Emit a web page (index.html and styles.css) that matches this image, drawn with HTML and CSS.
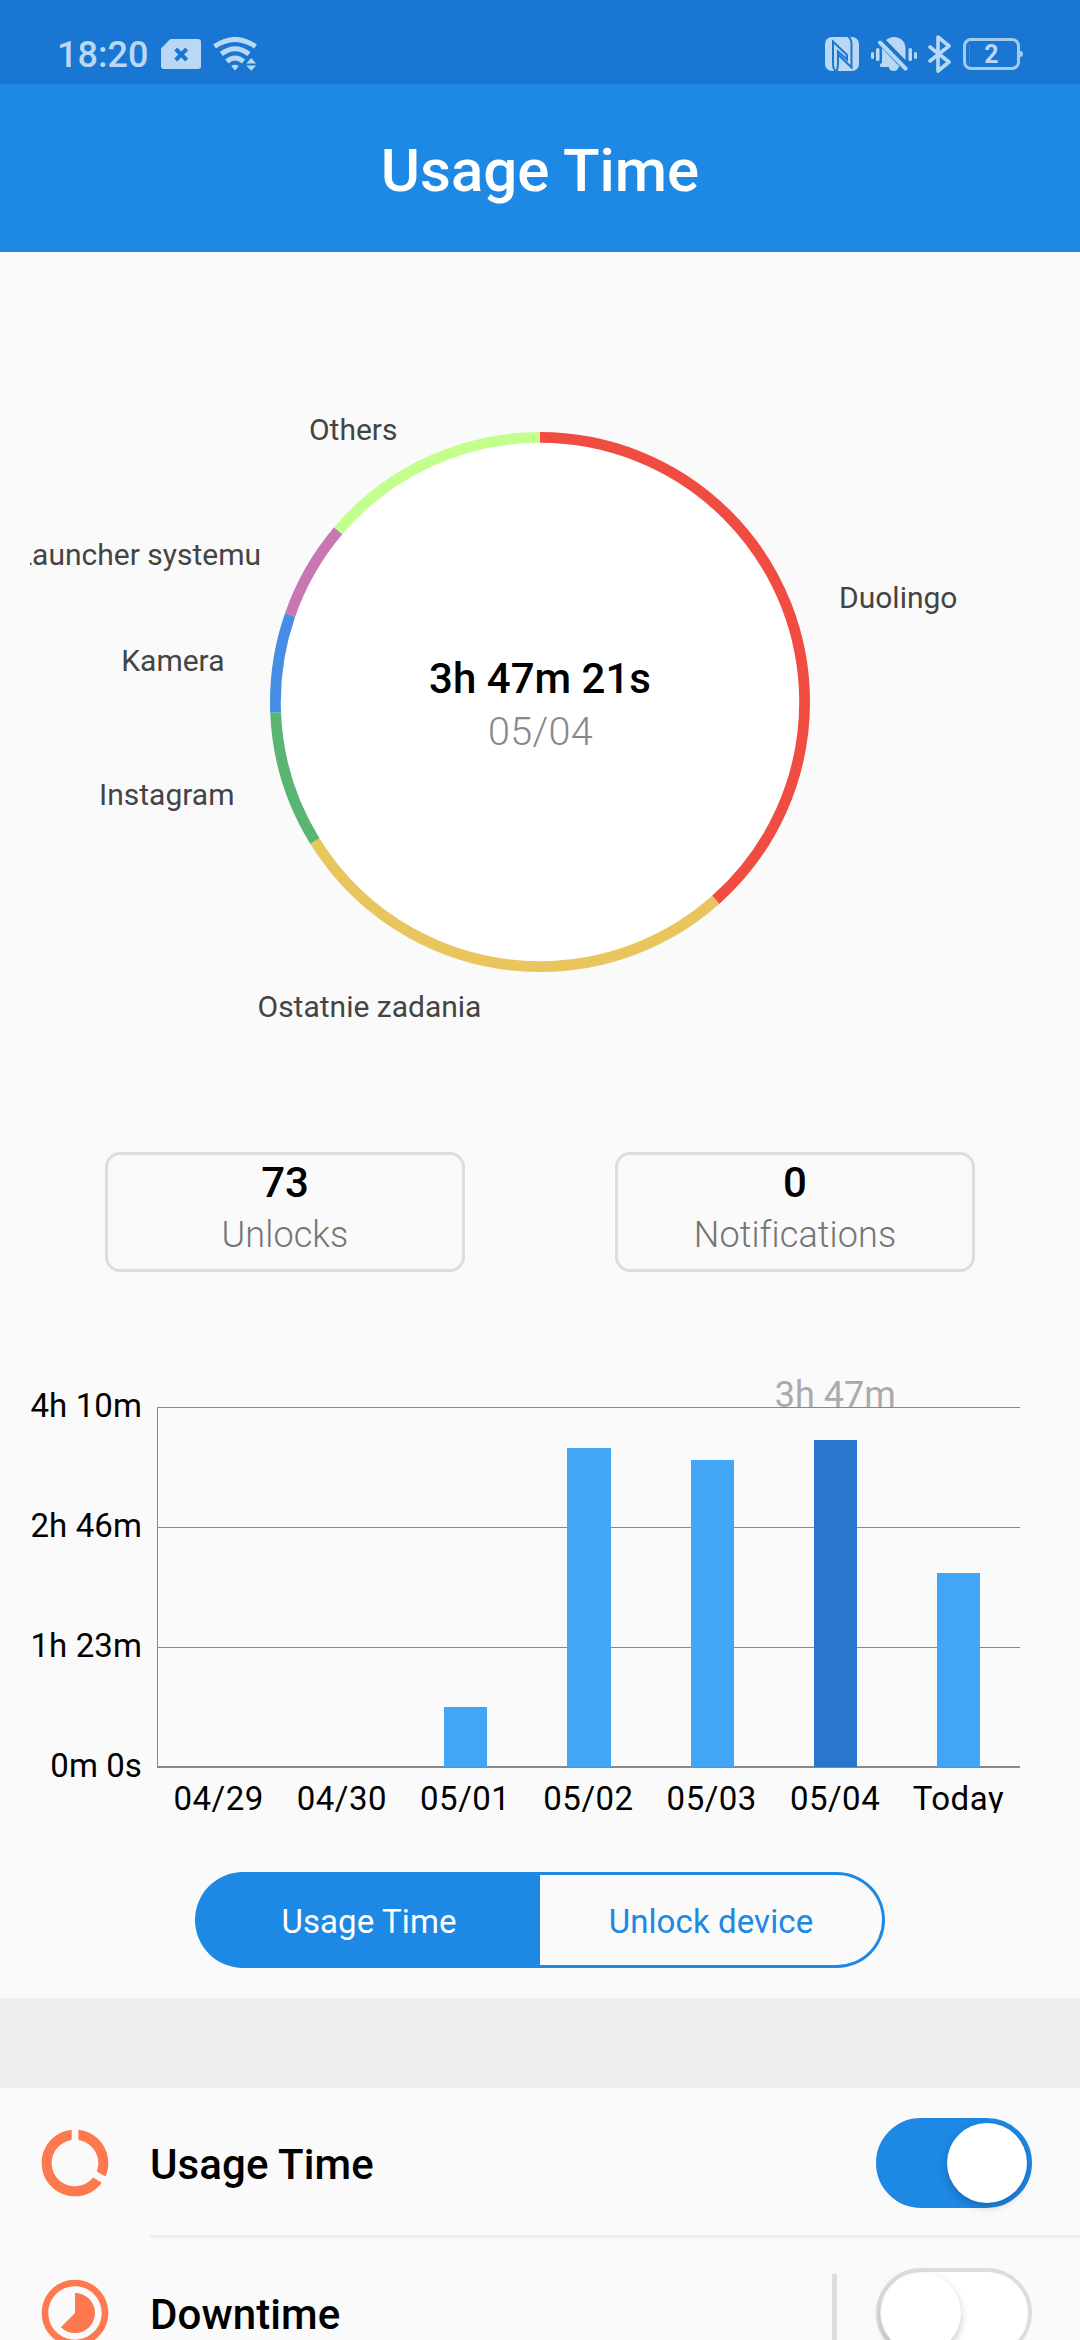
FILE: index.html
```html
<!DOCTYPE html>
<html lang="en">

<head>
    <meta charset="UTF-8">
    <title>Usage Time</title>
    <link rel="stylesheet" href="styles.css">
</head>

<body>
    <div class="status-bar">
        <span class="time">18:20</span>
        <svg class="sim" width="40" height="30" viewBox="0 0 40 30">
            <path fill="#bad7f3" d="M10 0h27a3 3 0 0 1 3 3v24a3 3 0 0 1-3 3H3a3 3 0 0 1-3-3V9.500L8.500 .8z" />
            <path stroke="#1976d2" stroke-width="4" d="M14.700 10l11 11M25.700 10l-11 11" />
        </svg>
        <svg class="wifi" width="44" height="34" viewBox="0 0 44 34">
            <g fill="none" stroke="#bad7f3" stroke-width="5">
                <path d="M1.500 9.500Q22-4.500 42.500 9.500" />
                <path d="M8.300 17Q22 6.500 36 17" />
                <path d="M13.800 24.500Q22 17.500 30.500 24.500" />
            </g>
            <path fill="#bad7f3" d="M18.200 29q3.800-2.600 7.600 0L22 33.500zM33.200 26.500l5-5.500 5 5.500zM33.200 28.500h10l-5 5.300z" />
        </svg>
        <span class="space"></span>
        <svg class="nfc" width="34" height="34" viewBox="0 0 34 34">
            <rect width="34" height="34" rx="7" fill="#bad7f3" />
            <g fill="none" stroke="#1976d2" stroke-width="2">
                <path d="M11.500 35C8 32.500 8 30 8 27V4.500L22 18V22.500L13 14.500V27C13 30 12.500 32 11.500 35" />
                <path d="M23-1C26 1.500 26.500 4 26.500 7V30.500L12.500 17" />
            </g>
        </svg>
        <svg class="bell" width="46" height="34" viewBox="0 0 46 34">
            <g fill="#bad7f3">
                <rect y="15" width="3" height="7" rx="1.500" />
                <rect x="5" y="11" width="3.500" height="13" rx="1.500" />
                <rect x="37.500" y="11" width="3.500" height="13" rx="1.500" />
                <rect x="43" y="15" width="3" height="7" rx="1.500" />
                <path d="M15 3Q19 0 22.500 0 34 .5 34.500 11.500V23zM11 11L29 30H27.500Q27 34 22.500 34 18.500 34 17.700 30H10Q8.500 30 8.800 28L11 25.500z" />
            </g>
            <path stroke="#bad7f3" stroke-width="4" stroke-linecap="round" d="M9 5.500L34.500 31.500" />
        </svg>
        <svg class="bluetooth" width="24" height="38" viewBox="0 0 24 38">
            <path fill="none" stroke="#bad7f3" stroke-width="3.600" stroke-linecap="round" stroke-linejoin="round" d="M2 12L21 27 10 36V2L21 11 2 26" />
        </svg>
        <div class="battery"><i></i><span>2</span></div>
    </div>

    <div class="header">Usage Time</div>

    <svg class="pie" width="1080" height="840" viewBox="0 252 1080 840">
        <circle cx="540" cy="702" r="262" fill="#fff" />
        <!-- one arc per app, dash lengths are in degrees -->
        <g class="arcs" transform="rotate(-90 540 702)">
            <circle cx="540" cy="702" r="264.600" pathLength="360" stroke="#f04c41" stroke-dasharray="138.400 360" />
            <circle cx="540" cy="702" r="264.600" pathLength="360" stroke="#e9c55e" stroke-dasharray="99.900 360" stroke-dashoffset="-138.400" />
            <circle cx="540" cy="702" r="264.600" pathLength="360" stroke="#5bb572" stroke-dasharray="29.400 360" stroke-dashoffset="-238.300" />
            <circle cx="540" cy="702" r="264.600" pathLength="360" stroke="#458de5" stroke-dasharray="21.500 360" stroke-dashoffset="-267.700" />
            <circle cx="540" cy="702" r="264.600" pathLength="360" stroke="#c777b2" stroke-dasharray="21.100 360" stroke-dashoffset="-289.200" />
            <circle cx="540" cy="702" r="264.600" pathLength="360" stroke="#c3ff8c" stroke-dasharray="49.700 360" stroke-dashoffset="-310.300" />
        </g>
        <clipPath id="chartArea">
            <rect x="30" y="252" width="1020" height="840" />
        </clipPath>
        <g class="labels" clip-path="url(#chartArea)">
            <text x="839" y="608">Duolingo</text>
            <text x="257.500" y="1017">Ostatnie zadania</text>
            <text class="end" x="234.500" y="805">Instagram</text>
            <text class="end" x="224.500" y="671">Kamera</text>
            <text class="end" x="261" y="565">Launcher systemu</text>
            <text class="end" x="397.500" y="440">Others</text>
        </g>
        <text class="total" x="540" y="693">3h 47m 21s</text>
        <text class="date" x="540.500" y="744.500">05/04</text>
    </svg>

    <div class="stats">
        <div class="stat">
            <b>73</b>
            <span>Unlocks</span>
        </div>
        <div class="stat">
            <b>0</b>
            <span>Notifications</span>
        </div>
    </div>

    <div class="chart">
        <div class="y-axis">
            <span>4h 10m</span>
            <span>2h 46m</span>
            <span>1h 23m</span>
            <span>0m 0s</span>
        </div>
        <div class="plot">
            <div class="grid">
                <i></i>
                <i></i>
                <i></i>
            </div>
            <div class="bars">
                <div class="slot"></div>
                <div class="slot"></div>
                <div class="slot"><div class="bar" style="height: 60px"></div></div>
                <div class="slot"><div class="bar" style="height: 319px"></div></div>
                <div class="slot"><div class="bar" style="height: 307.500px"></div></div>
                <div class="slot">
                    <span class="value">3h 47m</span>
                    <div class="bar active" style="height: 327.500px"></div>
                </div>
                <div class="slot"><div class="bar" style="height: 194.500px"></div></div>
            </div>
        </div>
        <div class="x-axis">
            <span>04/29</span>
            <span>04/30</span>
            <span>05/01</span>
            <span>05/02</span>
            <span>05/03</span>
            <span>05/04</span>
            <span>Today</span>
        </div>
    </div>

    <div class="tabs">
        <div class="tab active">Usage Time</div>
        <div class="tab">Unlock device</div>
    </div>

    <div class="list">
        <div class="item">
            <svg class="icon" viewBox="0 0 24 24">
                <path d="M13 2.050v3.030c3.390.49 6 3.390 6 6.920 0 .9-.18 1.750-.48 2.540l2.600 1.530c.56-1.240.88-2.620.88-4.070 0-5.180-3.950-9.450-9-9.950zM12 19c-3.870 0-7-3.130-7-7 0-3.530 2.610-6.430 6-6.920V2.050c-5.060.5-9 4.760-9 9.950 0 5.520 4.470 10 9.990 10 3.310 0 6.240-1.610 8.060-4.090l-2.600-1.530C16.170 17.980 14.210 19 12 19z" />
            </svg>
            <div class="content">
                <span class="name">Usage Time</span>
                <div class="switch on"><i></i></div>
            </div>
        </div>
        <div class="item">
            <svg class="icon" viewBox="0 0 24 24">
                <path d="M16.240 7.760C15.070 6.590 13.540 6 12 6v6l-4.240 4.240c2.340 2.340 6.140 2.340 8.490 0 2.340-2.340 2.340-6.140-.01-8.480zM12 2C6.480 2 2 6.480 2 12s4.480 10 10 10 10-4.480 10-10S17.520 2 12 2zm0 18c-4.420 0-8-3.580-8-8s3.580-8 8-8 8 3.580 8 8-3.580 8-8 8z" />
            </svg>
            <div class="content">
                <span class="name">Downtime</span>
                <div class="line"></div>
                <div class="switch"><i></i></div>
            </div>
        </div>
    </div>
</body>

</html>
```

FILE: styles.css
```css
* {
    box-sizing: border-box;
}

body {
    margin: 0;
    width: 1080px;
    height: 2340px;
    overflow: hidden;
    background: #fafafa;
    font-family: Roboto, "Noto Sans", sans-serif;
    color: #000;
}

.status-bar {
    display: flex;
    align-items: center;
    height: 84px;
    padding: 24px 60px 0 57px;
    background: #1976d2;
    color: #bad7f3;
}

.status-bar .time {
    width: 90px;
    padding-top: 2px;
    font-size: 36px;
    font-weight: 500;
    white-space: nowrap;
}

.status-bar svg {
    flex: none;
}

.status-bar .sim {
    margin-left: 14px;
}

.status-bar .wifi {
    margin-left: 12px;
}

.status-bar .space {
    flex: 1;
}

.status-bar .bell {
    margin-left: 12px;
}

.status-bar .bluetooth {
    margin-left: 11px;
}

.battery {
    position: relative;
    width: 57px;
    height: 32px;
    margin-left: 11px;
    border: 3px solid #a3cbf0;
    border-radius: 8px;
    font-size: 25px;
    font-weight: 700;
    line-height: 28px;
    text-align: center;
}

.battery i {
    position: absolute;
    left: 3px;
    top: 3px;
    width: 1px;
    height: 20px;
    background: #f04c41;
}

.battery:after {
    content: '';
    position: absolute;
    right: -6px;
    top: 10px;
    width: 3px;
    height: 6px;
    border-radius: 0 3px 3px 0;
    background: #a3cbf0;
}

.header {
    height: 168px;
    padding-top: 5px;
    background: #1e88e5;
    color: #fff;
    font-size: 60px;
    font-weight: 500;
    line-height: 163px;
    text-align: center;
}

.pie {
    display: block;
}

.pie .arcs circle {
    fill: none;
    stroke-width: 10.8px;
}

.pie .labels {
    fill: #444;
    font-size: 30px;
}

.pie .labels .end {
    text-anchor: end;
}

.pie .total {
    font-size: 42px;
    font-weight: 500;
    text-anchor: middle;
}

.pie .date {
    fill: #888;
    font-size: 39.5px;
    font-weight: 300;
    letter-spacing: .3px;
    text-anchor: middle;
}

.stats {
    display: flex;
    justify-content: space-between;
    padding: 60px 105px 0;
}

.stat {
    display: flex;
    flex-direction: column;
    width: 360px;
    height: 120px;
    border: 3px solid #ddd;
    border-radius: 15px;
    text-align: center;
}

.stat b {
    font-size: 42px;
    font-weight: 500;
    line-height: 55px;
}

.stat span {
    color: #757575;
    font-size: 36px;
    font-weight: 300;
    letter-spacing: .1px;
    line-height: 51px;
}

.chart {
    display: grid;
    grid-template-columns: 157px 863px;
    grid-template-rows: 361px 45px;
    margin-top: 135px;
    font-size: 33px;
}

.y-axis {
    display: flex;
    flex-direction: column;
    gap: 80px;
    margin-top: -21px;
    padding-right: 15px;
    letter-spacing: .1px;
    line-height: 40px;
    text-align: right;
}

.plot {
    display: grid;
    border-left: 1px solid #888;
}

.plot .grid,
.plot .bars {
    grid-area: 1 / 1;
}

.plot .grid {
    display: flex;
    flex-direction: column;
    border-bottom: 2px solid #888;
}

.plot .grid i {
    flex: none;
    height: 120px;
    border-top: 1px solid #888;
}

.plot .grid i:last-child {
    height: 119px;
}

.bars {
    display: flex;
    align-items: flex-start;
}

.slot {
    position: relative;
    flex: 1;
    display: flex;
    align-items: flex-end;
    justify-content: center;
    height: 360px;
}

.bar {
    width: 35%;
    background: #42a5f5;
}

.bar.active {
    background: #2977cd;
}

.value {
    position: absolute;
    bottom: 351px;
    color: #aaa;
    font-size: 36px;
    line-height: 42px;
    white-space: nowrap;
}

.x-axis {
    grid-column: 2;
    display: flex;
    overflow: hidden;
    letter-spacing: .5px;
    line-height: 61px;
    text-align: center;
}

.x-axis span {
    flex: 1;
}

.tabs {
    display: flex;
    width: 690px;
    height: 96px;
    margin: 59px auto 30px;
    color: #1e88e5;
    font-size: 33px;
    letter-spacing: .1px;
    line-height: 93px;
    text-align: center;
}

.tab {
    flex: 1;
    border: 3px solid #1e88e5;
    border-left: none;
    border-radius: 0 48px 48px 0;
}

.tab.active {
    border-left: 3px solid #1e88e5;
    border-right: none;
    border-radius: 48px 0 0 48px;
    background: #1e88e5;
    color: #fff;
}

.list {
    border-top: 90px solid #eee;
}

.item {
    display: flex;
    align-items: center;
    height: 150px;
    padding-left: 35px;
}

.item .icon {
    width: 80px;
    height: 80px;
    margin-right: 35px;
    fill: #ff7950;
}

.item .content {
    flex: 1;
    display: flex;
    align-items: center;
    height: 150px;
    padding: 3px 48px 0 0;
    border-bottom: 3px solid #eee;
}

.item .name {
    flex: 1;
    padding-top: 3px;
    font-size: 42px;
    font-weight: 500;
    letter-spacing: .1px;
}

.item .line {
    width: 5px;
    height: 78px;
    margin-right: 39px;
    background: #ddd;
}

.switch {
    width: 156px;
    height: 90px;
    padding: 1px;
    border: 4px solid #ddd;
    border-radius: 45px;
    background: #fff;
}

.switch i {
    display: block;
    width: 80px;
    height: 80px;
    border-radius: 50%;
    background: #fff;
    box-shadow: 0 4px 9px rgba(0, 0, 0, .22);
}

.switch.on {
    border-color: #1e88e5;
    background: #1e88e5;
}

.switch.on i {
    margin-left: auto;
}
```
